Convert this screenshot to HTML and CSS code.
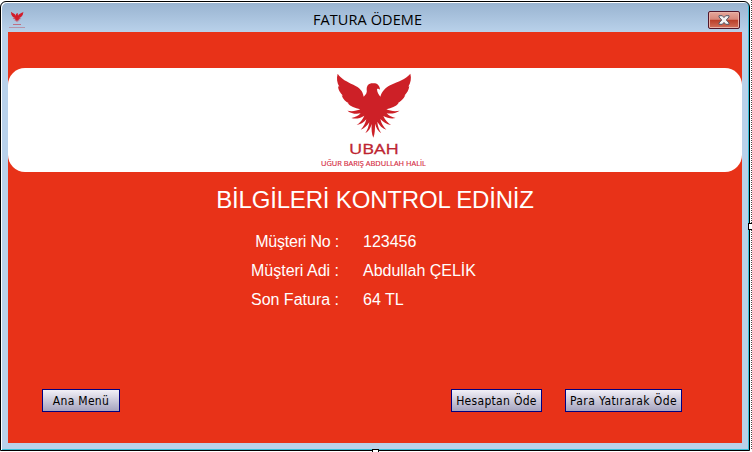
FILE: index.html
```html
<!DOCTYPE html>
<html lang="tr">
<head>
<meta charset="utf-8">
<title>FATURA ÖDEME</title>
<link rel="stylesheet" href="styles.css">
</head>
<body>
<svg class="defs" width="0" height="0" aria-hidden="true">
  <symbol id="eagle" viewBox="0 0 252 210">
    <path d="M20 11C31 27 48 35 67 44C86 53 95 62 98 80C105 74 109 68 107 58C107 46 114 40 124 40C135 38 146 43 147 59C144 56 141 56 138 57C138 67 143 74 148 80C153 65 162 53 179 45C202 34 223 29 238 11C242 25 239 38 232 50L235 49C233 61 228 69 220 77L223 76C217 88 209 95 200 100L203 100C194 110 182 115 166 118C178 123 191 125 206 122C194 130 181 132 167 130C174 138 183 142 194 144C181 147 169 144 157 138C163 151 170 159 180 165C166 163 156 156 148 147C151 161 158 171 166 179C154 175 145 166 139 155C140 170 145 181 151 190C141 183 135 173 132 161C132 178 132 190 127 203C122 192 121 178 122 162C119 174 113 184 103 190C109 180 113 170 115 157C108 168 100 175 89 179C97 171 103 161 106 148C98 158 88 164 77 165C87 158 95 149 100 137C87 145 74 148 61 144C73 142 82 138 89 130C75 133 61 131 49 122C63 125 76 123 88 118C71 115 59 110 50 100L54 100C44 96 36 88 32 76L36 77C27 69 22 60 21 49L25 50C18 38 16 25 20 11Z"/>
  </symbol>
</svg>
<div class="window">
  <header class="titlebar">
    <span class="app-icon">
      <svg class="mini"><use href="#eagle"/></svg>
      <span class="mini-name"></span>
      <span class="mini-tag"></span>
    </span>
    <h1 class="caption">FATURA ÖDEME</h1>
    <button class="close" aria-label="Kapat">
      <svg width="12" height="10" viewBox="0 0 12 10"><path d="M1 .7H4.3L6 2.6L7.7.7H11V2L8.3 5L11 8V9.3H7.7L6 7.4L4.3 9.3H1V8L3.7 5L1 2Z" fill="#f4f4f4" stroke="#535666" stroke-width="1"/></svg>
    </button>
  </header>
  <main class="client">
    <div class="brand">
      <svg class="logo" width="84" height="70"><use href="#eagle"/></svg>
      <svg class="words" width="126" height="30">
        <text class="name" x="39" y="14" textLength="50" lengthAdjust="spacingAndGlyphs">UBAH</text>
        <text class="tag" x="11" y="25.5" textLength="105" lengthAdjust="spacingAndGlyphs">UĞUR BARIŞ ABDULLAH HALİL</text>
      </svg>
    </div>
    <h2 class="heading">BİLGİLERİ KONTROL EDİNİZ</h2>
    <dl class="details">
      <dt class="first">Müşteri No :</dt><dd>123456</dd>
      <dt>Müşteri Adi :</dt><dd>Abdullah ÇELİK</dd>
      <dt>Son Fatura :</dt><dd>64 TL</dd>
    </dl>
    <div class="actions">
      <button class="btn menu">Ana Menü</button>
      <button class="btn account">Hesaptan Öde</button>
      <button class="btn cash">Para Yatırarak Öde</button>
    </div>
  </main>
</div>
<i class="guide"></i>
<i class="grip right"></i>
<i class="grip bottom"></i>
</body>
</html>
```
FILE: styles.css
```css
* { box-sizing: border-box; }
body {
  margin: 0;
  width: 752px;
  height: 452px;
  padding-top: 1px;
  overflow: hidden;
  position: relative;
  background: #fff;
  font-family: "Liberation Sans", Arial, sans-serif;
}
.defs { position: absolute; }
.window {
  width: 750px;
  height: 450px;
  border: 1px solid #000;
  border-radius: 6px 6px 0 0;
  padding: 0 7px 5px 7px;
  background: linear-gradient(#98b3d0, #b9d1ea 30px);
  box-shadow: inset 1px 1px #fff, inset -1px -1px #36bfd9;
}
.titlebar {
  height: 30px;
  display: flex;
  align-items: flex-start;
}
.app-icon {
  width: 18px;
  padding-top: 9px;
  display: flex;
  flex-direction: column;
  align-items: center;
}
.mini { width: 14px; height: 12px; fill: #d21c2a; }
.mini-name { width: 8px; height: 1px; margin-top: 1px; background: #bd6f83; }
.mini-tag { width: 16px; height: 1px; margin-top: 2px; background: #b694a9; }
.caption {
  flex: 1;
  margin: 8px 0 0 1px;
  text-align: center;
  font: 14.5px/20px "Open Sans", "Noto Sans", sans-serif;
  letter-spacing: .1px;
  color: #000;
}
.close {
  width: 32px;
  height: 18px;
  margin: 9px 2px 0 0;
  padding: 0;
  display: flex;
  align-items: center;
  justify-content: center;
  border: 1px solid #51172a;
  border-radius: 2px;
  background: linear-gradient(#e5a79b, #d7877a 46%, #b93e28 50%, #d2705b);
  box-shadow: inset 0 0 0 1px #e8b2a8;
}
.client {
  height: 411px;
  padding-top: 36px;
  background: #e83218;
  color: #fff;
}
.brand {
  height: 104px;
  border-radius: 17px;
  background: #fff;
  display: flex;
  flex-direction: column;
  align-items: center;
  padding: 2px 4px 0 0;
}
.logo { fill: #cd2027; }
.words { fill: #bd2431; }
.name { font: 14px "Open Sans", sans-serif; stroke: #bd2431; stroke-width: .3px; }
.tag { font: 7px "Open Sans", sans-serif; fill: #d52a40; stroke: #d52a40; stroke-width: .15px; }
.heading {
  margin: 13px 0 0;
  text-align: center;
  font-size: 24px;
  font-weight: 400;
  line-height: 30px;
  letter-spacing: -.18px;
}
.details {
  margin: 12px 0 0;
  display: grid;
  grid-template-columns: 331px 1fr;
  column-gap: 24px;
  grid-auto-rows: 29px;
  font-size: 16px;
  line-height: 29px;
}
.details dt { text-align: right; }
.details .first { letter-spacing: -.2px; }
.details dd { margin: 0; }
.actions {
  display: flex;
  margin: 75px 0 0 34px;
}
.btn {
  height: 23px;
  padding: 0;
  border: 1px solid #000080;
  background: linear-gradient(#f2f0f7, #a5a3be);
  color: #000;
  font: 12px "DejaVu Sans Condensed", "DejaVu Sans", sans-serif;
  letter-spacing: .3px;
  white-space: nowrap;
}
.menu { width: 78px; }
.account { width: 91px; margin-left: 331px; }
.cash { width: 117px; margin-left: 23px; letter-spacing: .42px; }
.guide {
  position: absolute;
  right: 0;
  top: 0;
  width: 1px;
  height: 450px;
  background: repeating-linear-gradient(#444 0 1px, #fff 1px 2px);
}
.grip {
  position: absolute;
  width: 7px;
  height: 7px;
  border: 1px solid #000;
  background: #fff;
}
.right { left: 748px; top: 223px; }
.bottom { left: 372px; top: 449px; }
```
